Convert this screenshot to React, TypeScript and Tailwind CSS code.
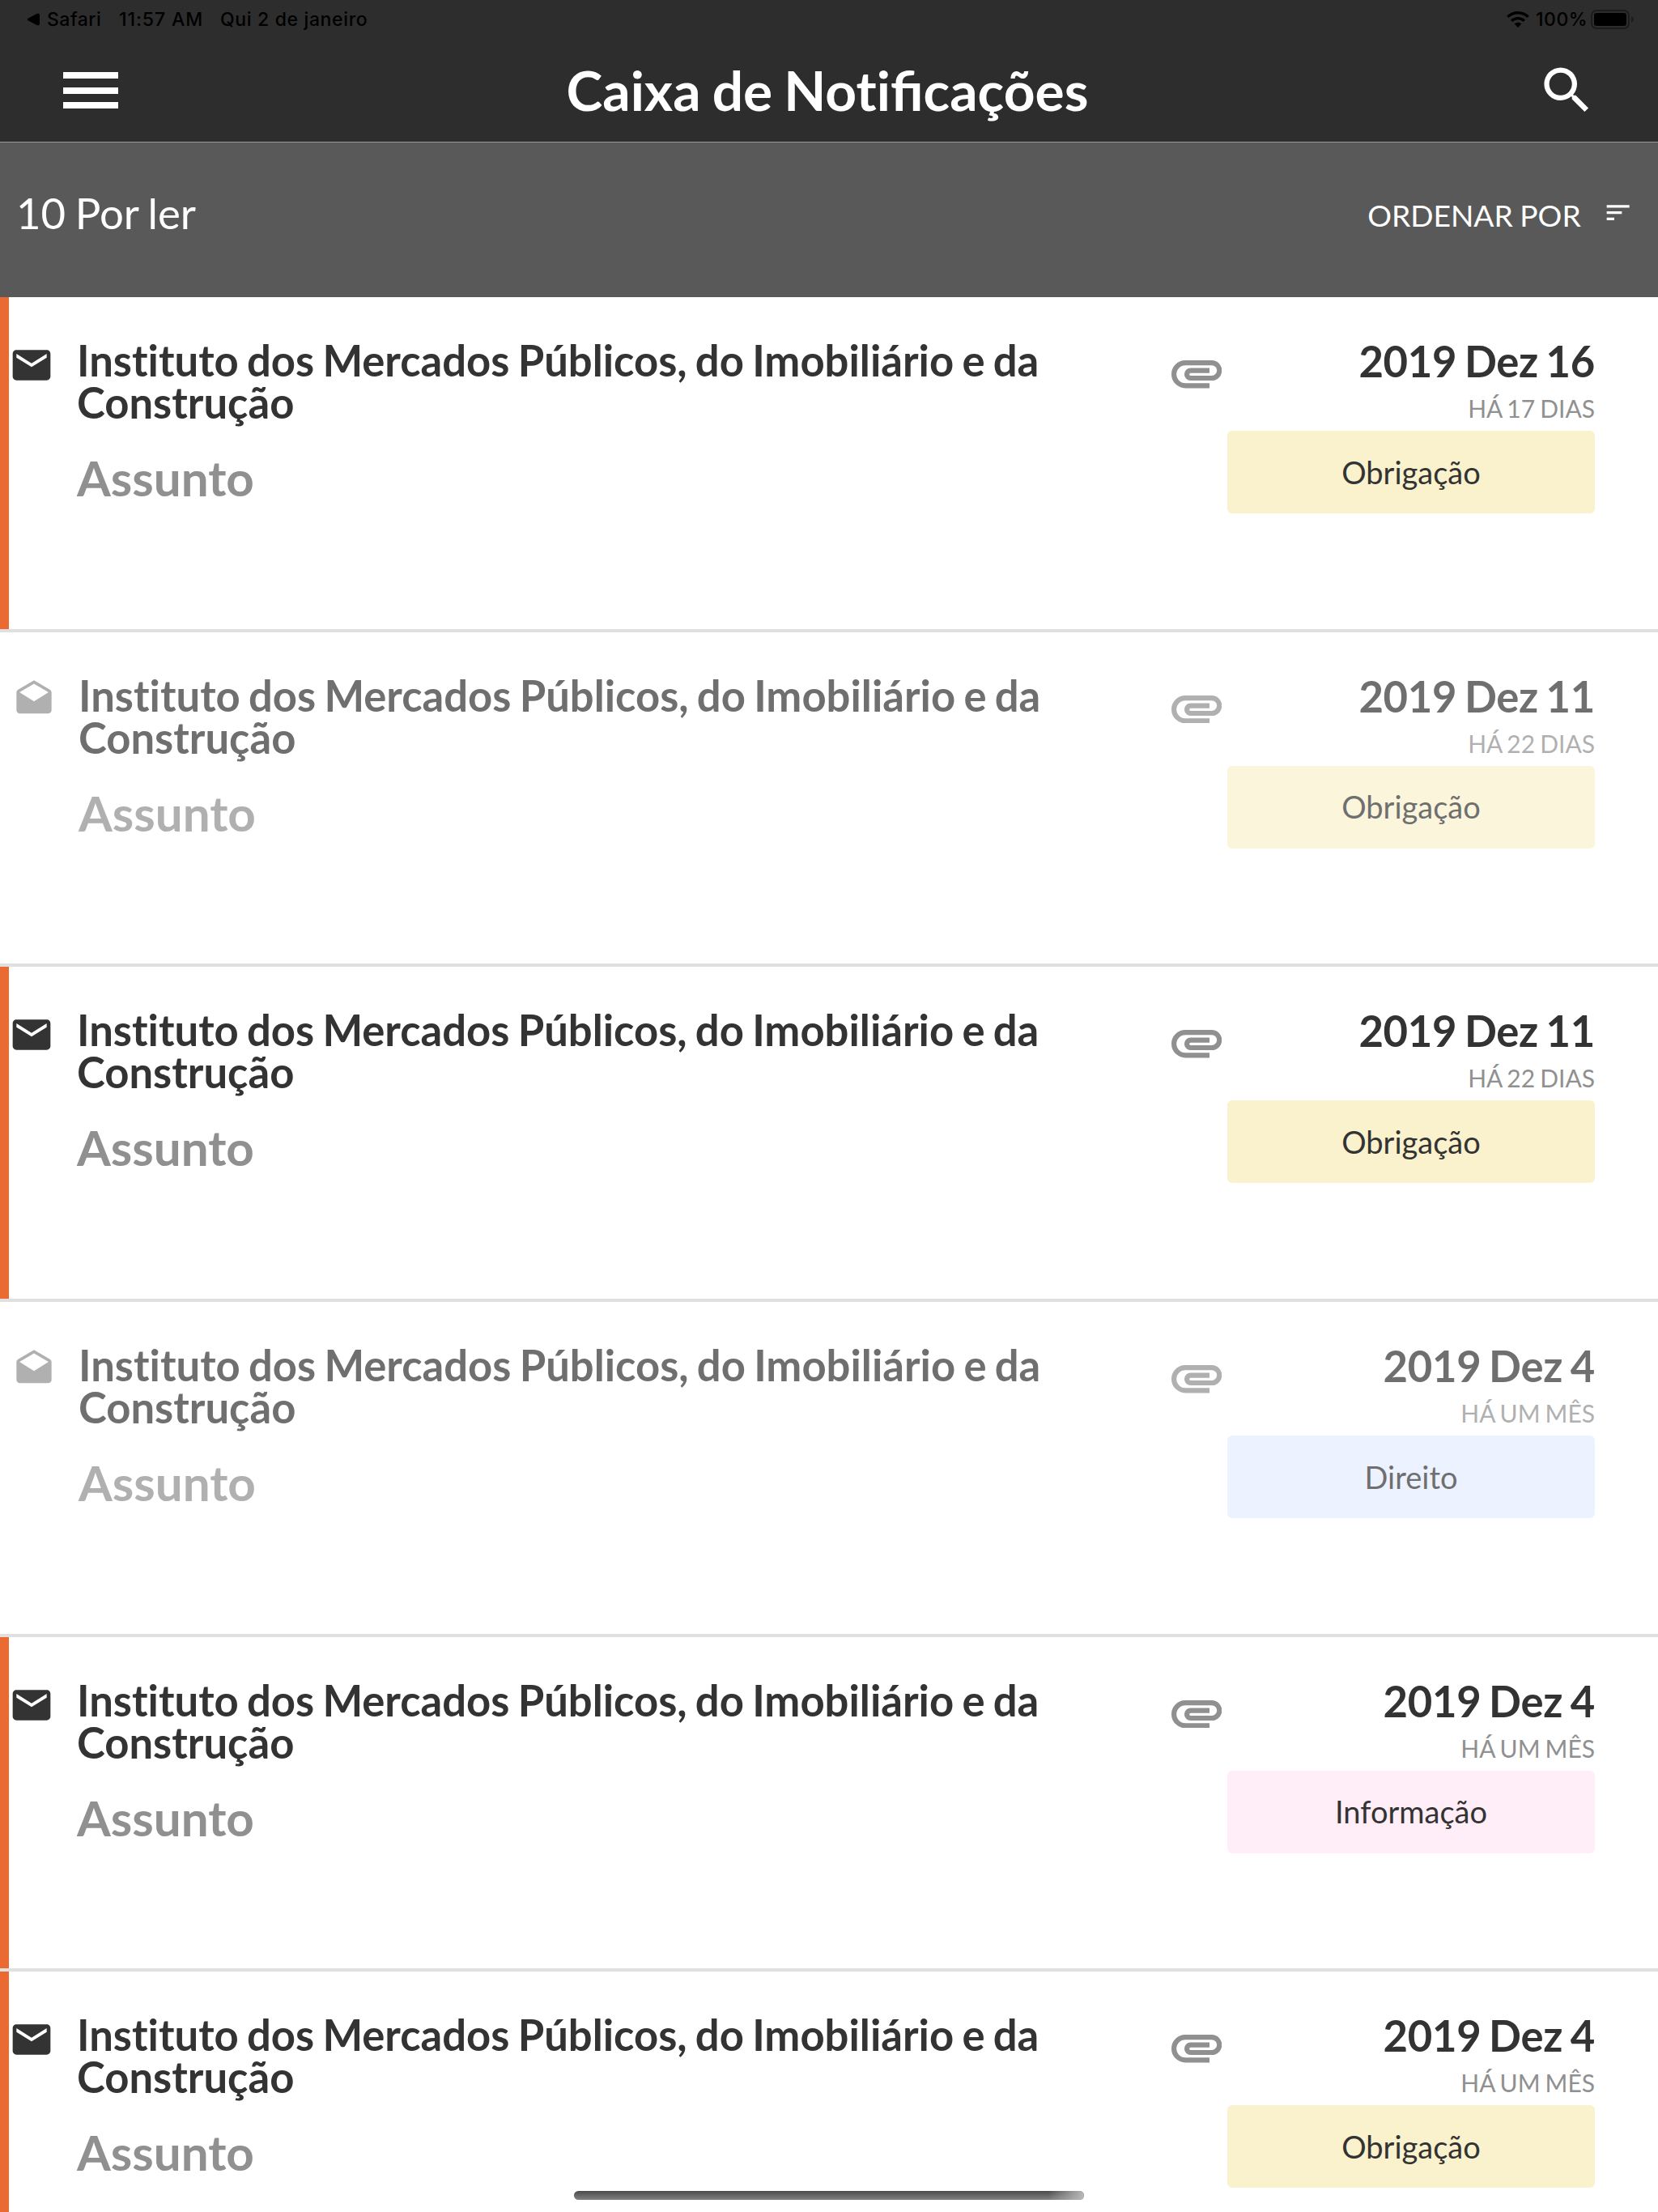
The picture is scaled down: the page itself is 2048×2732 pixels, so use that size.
import React from 'react';
import { MdDrafts, MdEmail, MdSearch, MdSort } from 'react-icons/md';

type Category = 'Obrigação' | 'Direito' | 'Informação';

interface Notification {
  date: string;
  age: string;
  category: Category;
  read: boolean;
}

const notifications: Notification[] = [
  { date: '2019 Dez 16', age: 'HÁ 17 DIAS', category: 'Obrigação', read: false },
  { date: '2019 Dez 11', age: 'HÁ 22 DIAS', category: 'Obrigação', read: true },
  { date: '2019 Dez 11', age: 'HÁ 22 DIAS', category: 'Obrigação', read: false },
  { date: '2019 Dez 4', age: 'HÁ UM MÊS', category: 'Direito', read: true },
  { date: '2019 Dez 4', age: 'HÁ UM MÊS', category: 'Informação', read: false },
  { date: '2019 Dez 4', age: 'HÁ UM MÊS', category: 'Obrigação', read: false },
];

// Helper function to get the badge background for a category
const getCategoryColor = (category: Category): string => {
  if (category === 'Direito') return 'bg-[#e5edff]';
  if (category === 'Informação') return 'bg-[#ffedf7]';
  return 'bg-[#faf1cd]';
};

function AttachIcon({ className }: { className?: string }) {
  return (
    <svg className={className} viewBox="0 0 62.4 34.5" fill="none" stroke="currentColor" strokeWidth="6.2">
      <path d="M47 31.3H17.200a14.100 14.100 0 0 1 0-28.200H49.800a9.450 9.450 0 0 1 0 18.900H23.700a4.700 4.700 0 0 1 0-9.400H47" />
    </svg>
  );
}

function StatusBar() {
  return (
    <div className="flex h-12 items-center justify-between pl-[33px] pr-[30px] font-['Inter',sans-serif] text-[23px] font-medium text-black">
      <div className="flex items-center tracking-[0.5px]">
        <svg className="mr-[9px] h-[16px] w-4" viewBox="0 0 16 16">
          <path d="M1.5 6.8 13 .8Q16 0 16 3v10q0 3-3 2.200L1.500 9.200Q0 8 1.500 6.800Z" />
        </svg>
        <span className="w-[89px] whitespace-nowrap">Safari</span>
        <span className="w-[125px] whitespace-nowrap tracking-[0.9px]">11:57 AM</span>
        <span className="whitespace-nowrap tracking-[0.65px]">Qui 2 de janeiro</span>
      </div>
      <div className="flex items-center">
        <svg className="mr-[8px] h-5 w-7" viewBox="0 0 28 20">
          <path d="M14 0c5.400 0 10.300 2.100 13.800 5.600l-2.300 2.500A16.300 16.300 0 0 0 14 3.500 16.300 16.300 0 0 0 2.500 8.100L.2 5.600A19.600 19.600 0 0 1 14 0Z" />
          <path d="M14 6.900c3.500 0 6.700 1.300 9.100 3.600l-2.400 2.500A9.700 9.700 0 0 0 14 10.300 9.700 9.700 0 0 0 7.300 13l-2.400-2.500A13.200 13.200 0 0 1 14 6.900Z" />
          <path d="M14 13.700c1.700 0 3.200.6 4.400 1.600L14 20l-4.400-4.700a6.700 6.700 0 0 1 4.400-1.600Z" />
        </svg>
        <span className="mr-[4px] w-[64px] whitespace-nowrap tracking-[0.5px]">100%</span>
        <svg className="h-6 w-[53px]" viewBox="0 0 53 24">
          <rect x="1" y="1" width="46" height="22" rx="6" fill="none" stroke="#1c1c1c" strokeWidth="2" />
          <rect x="4" y="4" width="40" height="16" rx="3" />
          <path d="M50 8q3 1.500 3 4t-3 4Z" fill="#1c1c1c" />
        </svg>
      </div>
    </div>
  );
}

function Header() {
  return (
    <header className="h-44 border-b border-[#999999] bg-[#2d2d2d]">
      <StatusBar />
      <div className="flex h-[127px] items-start justify-between pl-[78px] pr-[75px] text-white">
        <button className="mt-[41px] flex w-[68px] flex-col gap-[10.6px]" aria-label="Menu">
          <span className="h-2 w-full bg-white" />
          <span className="h-2 w-full bg-white" />
          <span className="h-2 w-full bg-white" />
        </button>
        {/* keeps the "fi" ligature but not the "ti" one */}
        <h1 className="mt-[22px] text-[67.7px] leading-[82px] font-bold [word-spacing:-0.035em]">
          Caixa de <span className="[font-variant-ligatures:none]">Not</span>ificações
        </h1>
        <button className="mt-[26px]" aria-label="Pesquisar">
          <MdSearch className="h-[75px] w-[75px]" />
        </button>
      </div>
    </header>
  );
}

function NotificationRow({ item }: { item: Notification }) {
  return (
    <li className="flex h-[413.68px] border-b-4 border-[#e0e0e0]">
      <div className={`w-[11px] shrink-0 ${item.read ? '' : 'bg-[#ea6a32]'}`} />
      <div className={`flex flex-1 text-[#333333] ${item.read ? 'opacity-70' : ''}`}>
        {item.read ? (
          <MdDrafts className="mt-[57px] ml-[5px] h-[52px] w-[52px] shrink-0 text-[#909090]" />
        ) : (
          <MdEmail className="mt-[56px] h-14 w-14 shrink-0" />
        )}
        <div className={`mt-[52px] w-[1240px] shrink-0 ${item.read ? 'ml-[29px]' : 'ml-[28px]'}`}>
          <h2 className="text-[52.6px] leading-[52px] font-bold [word-spacing:-0.048em] [font-variant-ligatures:none]">
            Instituto dos Mercados Públicos, do Imobiliário e da Construção
          </h2>
          <p className="mt-[31px] text-[60.2px] leading-[72px] font-bold text-[#909090]">Assunto</p>
        </div>
        <div className="flex flex-1 justify-end pr-[78px]">
          <AttachIcon className="mt-[78px] mr-[6.6px] h-[34.5px] w-[62.4px] shrink-0 text-[#909090]" />
          <div className="mt-[47px] flex w-[454px] shrink-0 flex-col items-end">
            <span className="text-[52.6px] leading-[64px] font-bold tracking-[-0.3px] [word-spacing:-0.053em]">
              {item.date}
            </span>
            <span className="mt-[7px] text-[30px] leading-[38px] text-[#909090] [word-spacing:-0.055em]">{item.age}</span>
            <span
              className={`mt-[9px] flex h-[102px] w-full items-center justify-center rounded-[6px] text-[38px] ${getCategoryColor(item.category)}`}
            >
              {item.category}
            </span>
          </div>
        </div>
      </div>
    </li>
  );
}

export default function App() {
  return (
    <div className="relative h-[2732px] w-[2048px] overflow-hidden bg-white font-['Lato',sans-serif]">
      <Header />
      <div className="flex h-[191px] items-center justify-between bg-[#595959] pb-[18px] pl-[20px] pr-[31px] text-white">
        <span className="text-[52.7px] [word-spacing:-0.036em]">10 Por ler</span>
        <div className="flex items-center gap-[27px]">
          <span className="mt-1.5 text-[37.2px] [word-spacing:-0.028em]">ORDENAR POR</span>
          <MdSort className="h-[37.3px] w-[37.3px]" />
        </div>
      </div>
      <ul>
        {notifications.map((item, index) => (
          <NotificationRow key={index} item={item} />
        ))}
      </ul>
      {/* Home indicator */}
      <div className="absolute bottom-[15px] left-[709px] flex h-[11px] w-[630px] justify-end overflow-hidden rounded-full bg-linear-to-b from-[#4a4a4a] to-[#828282]">
        <div className="h-full w-11 bg-linear-to-r from-transparent to-[#b8b8b8]" />
      </div>
    </div>
  );
}
